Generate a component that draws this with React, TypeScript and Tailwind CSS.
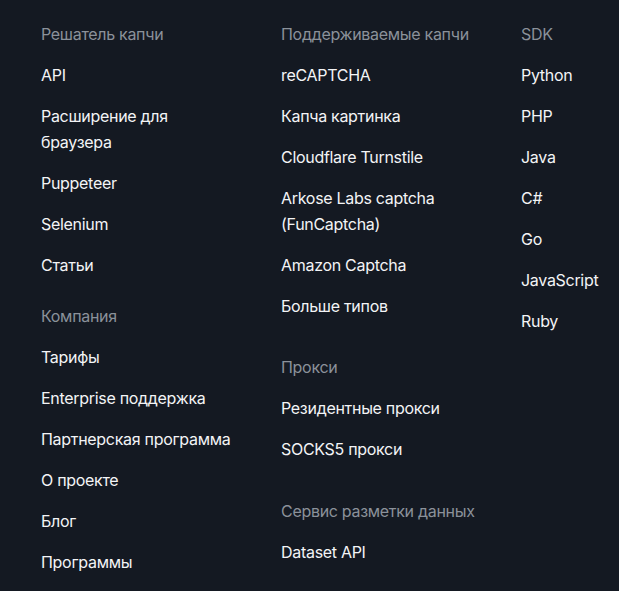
import React from 'react';

type Section = { title: string; links: string[]; gap?: string };

const columns: Section[][] = [
  [
    { title: 'Решатель капчи', links: ['API', 'Расширение для браузера', 'Puppeteer', 'Selenium', 'Статьи'] },
    { title: 'Компания', links: ['Тарифы', 'Enterprise поддержка', 'Партнерская программа', 'О проекте', 'Блог', 'Программы'], gap: 'mt-[25px]' },
  ],
  [
    {
      title: 'Поддерживаемые капчи',
      links: ['reCAPTCHA', 'Капча картинка', 'Cloudflare Turnstile', 'Arkose Labs captcha (FunCaptcha)', 'Amazon Captcha', 'Больше типов'],
    },
    { title: 'Прокси', links: ['Резидентные прокси', 'SOCKS5 прокси'], gap: 'mt-[35px]' },
    { title: 'Сервис разметки данных', links: ['Dataset API'], gap: 'mt-[36px]' },
  ],
  [{ title: 'SDK', links: ['Python', 'PHP', 'Java', 'C#', 'Go', 'JavaScript', 'Ruby'] }],
];

const FooterSection: React.FC<{ section: Section }> = ({ section }) => (
  <div className={section.gap}>
    <h3 className="text-[16px] leading-[26px] font-normal tracking-[-0.3px] text-[#8b919a]">{section.title}</h3>
    <ul className="mt-[15px] flex flex-col gap-[15px]">
      {section.links.map((link) => (
        <li key={link}>
          <a href="#" className="block max-w-[200px] text-[16px] leading-[26px] font-normal tracking-[-0.3px] text-[#f3f4f6]">
            {link}
          </a>
        </li>
      ))}
    </ul>
  </div>
);

const App: React.FC = () => {
  return (
    <footer
      className="min-h-[591px] w-full bg-[#141922] pl-[41px] pt-[21px]"
      style={{ fontFamily: 'Inter, "Noto Sans", sans-serif' }}
    >
      <div className="grid grid-cols-[240px_240px_1fr]">
        {columns.map((col, i) => (
          <div key={i} className="flex flex-col">
            {col.map((section) => (
              <FooterSection key={section.title} section={section} />
            ))}
          </div>
        ))}
      </div>
    </footer>
  );
};

export default App;
